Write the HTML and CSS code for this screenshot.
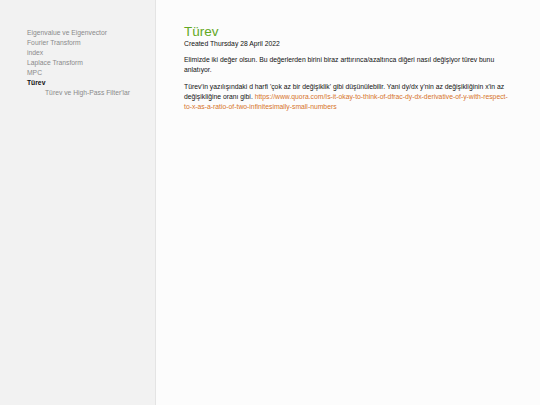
FILE: index.html
```html
<!DOCTYPE html>
<html>
<head>
<meta charset="utf-8">
<link rel="stylesheet" href="styles.css">
</head>
<body>
<div class="layout">
  <nav class="sidebar">
    <ul class="nav">
      <li>Eigenvalue ve Eigenvector</li>
      <li>Fourier Transform</li>
      <li>index</li>
      <li>Laplace Transform</li>
      <li>MPC</li>
      <li class="current">Türev</li>
      <li class="sub">Türev ve High-Pass Filter'lar</li>
    </ul>
  </nav>
  <main class="content">
    <h1 class="title">Türev</h1>
    <div class="created">Created Thursday 28 April 2022</div>
    <p>Elimizde iki değer olsun. Bu değerlerden birini biraz arttırınca/azaltınca diğeri nasıl değişiyor türev bunu anlatıyor.</p>
    <p>Türev'in yazılışındaki d harfi 'çok az bir değişiklik' gibi düşünülebilir. Yani dy/dx y'nin az değişikliğinin x'in az değişikliğine oranı gibi. <a href="#">https://www.quora.com/Is-it-okay-to-think-of-dfrac-dy-dx-derivative-of-y-with-respect-to-x-as-a-ratio-of-two-infinitesimally-small-numbers</a></p>
  </main>
</div>
</body>
</html>
```
FILE: styles.css
```css
html, body { margin: 0; padding: 0; height: 100%; }
body { font-family: "Liberation Sans", Arial, sans-serif; background: #fcfcfc; color: #111; }
.layout { display: flex; height: 405px; }
.sidebar { width: 156px; background: #f2f2f2; border-right: 1px solid #e4e4e4; padding: 28px 0 0 27px; box-sizing: border-box; flex: none; }
.nav { list-style: none; margin: 0; padding: 0; font-size: 6.75px; line-height: 10px; color: #8a8a8a; }
.nav .current { color: #111; font-weight: bold; }
.nav .sub { padding-left: 18px; }
.content { padding: 25px 0 0 28px; width: 325px; font-size: 6.8px; line-height: 10px; }
.title { font-weight: normal; color: #62a824; font-size: 13.5px; line-height: 14px; margin: 0; }
.created { margin: 0 0 6px; }
.content p { margin: 0 0 7px; }
.content a { color: #d6732a; text-decoration: none; }
```
